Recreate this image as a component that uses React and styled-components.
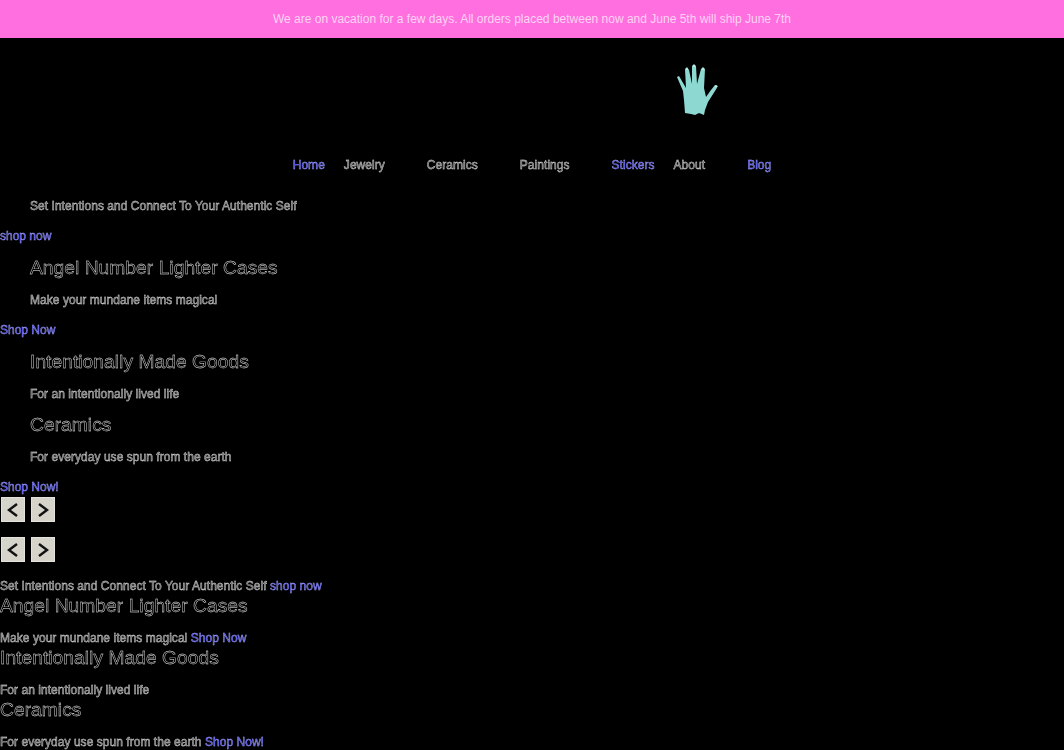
import styled, { createGlobalStyle } from 'styled-components';

const GlobalStyle = createGlobalStyle`
  html, body {
    margin: 0;
    background: #000;
    font-family: "Liberation Sans", Arial, sans-serif;
    font-size: 12px;
    line-height: 14px;
    height: 750px;
    overflow: hidden;
  }
`;

const Banner = styled.div`
  height: 38px;
  background: #ff6fdf;
  color: #ffd4f4;
  display: flex;
  align-items: center;
  justify-content: center;
  font-size: 12px;
`;

const LogoRow = styled.div`
  height: 78px;
  padding-top: 26px;
  padding-left: 677px;
`;

const Nav = styled.nav`
  display: flex;
  justify-content: center;
  gap: 19px;
  margin-bottom: 27px;
  padding-top: 16px;
`;

/* hollow thin glyphs, the reference text renders as dotted outlines */
const hollow = (fill, stroke, width) => `
  color: ${fill};
  -webkit-text-stroke: ${width}px ${stroke};
  will-change: opacity;
`;

const grey = hollow('#4a4a4a', '#e0e0e0', 0.4);
const blue = hollow('#3c3cd8', '#a8a8ff', 0.4);

const NavItem = styled.a`
  ${(p) => (p.$active ? blue : grey)}
  letter-spacing: 0.04px;
  padding-right: ${(p) => (p.$menu ? '23px' : '0')};
`;

const Text = styled.p`
  ${grey}
  letter-spacing: 0.04px;
  margin: 0 0 ${(p) => (p.$flat ? '3px' : p.$snug ? '14px' : '16px')};
  padding-left: ${(p) => (p.$flat ? '0' : '30px')};
`;

const ShopLink = styled.a`
  ${blue}
  display: ${(p) => (p.$inline ? 'inline' : 'block')};
  padding-bottom: ${(p) => (p.$inline ? '0' : '1px')};
`;

const Heading = styled.h2`
  ${hollow('#000', '#efefef', 0.4)}
  letter-spacing: 0.05px;
  font-size: 19.2px;
  line-height: 20px;
  font-weight: normal;
  margin: ${(p) => (p.$flat ? '0 0 15px' : '14px 0 15px')};
  padding-left: ${(p) => (p.$flat ? '0' : '30px')};
`;

const ControlStack = styled.div`
  display: flex;
  flex-direction: column;
  gap: 15px;
  margin: 2px 0 17px;
`;

const Controls = styled.div`
  display: flex;
  gap: 6px;
  padding-left: 1px;
`;

const Arrow = styled.button`
  width: 24px;
  height: 25px;
  padding: 0;
  border: 1px solid #e6e3dc;
  background: #d6d3cb;
  display: flex;
  align-items: center;
  justify-content: center;
`;

const Chevron = ({ left }) => (
  <svg width="14" height="16" viewBox="0 0 14 16" fill="none" stroke="#111" strokeWidth="2.4">
    <path d={left ? 'M11 2 L3 8 L11 14' : 'M3 2 L11 8 L3 14'} />
  </svg>
);

const Hand = () => (
  <svg width="42" height="52" viewBox="0 0 42 52">
    <path
      fill="#8ed8d2"
      d="M0 13 L2 12 L9 24 L8 5 L10 3 L12 6 L15 20 L15 2 L17 0 L19 2 L20 20 L24 5 L26 3 L28 5 L27 24 L29 33 L34 26 L38 21 L41 22 L38 27 L31 38 L28 46 L27 51 L22 49 L18 51 L14 50 L8 49 L7 36 L6 27 Z"
    />
    <path stroke="#e4fbf9" strokeWidth="1" d="M38 22 L40 22 M17 1 L17 3 M26 4 L26 6 M10 4 L10 6" />
  </svg>
);

const ControlRow = () => (
  <Controls>
    <Arrow><Chevron left /></Arrow>
    <Arrow><Chevron /></Arrow>
  </Controls>
);

export default function App() {
  return (
    <>
      <GlobalStyle />
      <Banner>We are on vacation for a few days. All orders placed between now and June 5th will ship June 7th</Banner>
      <LogoRow><Hand /></LogoRow>
      <Nav>
        <NavItem $active>Home</NavItem>
        <NavItem $menu>Jewelry</NavItem>
        <NavItem $menu>Ceramics</NavItem>
        <NavItem $menu>Paintings</NavItem>
        <NavItem $active>Stickers</NavItem>
        <NavItem $menu>About</NavItem>
        <NavItem $active>Blog</NavItem>
      </Nav>

      <Text>Set Intentions and Connect To Your Authentic Self</Text>
      <ShopLink>shop now</ShopLink>
      <Heading>Angel Number Lighter Cases</Heading>
      <Text>Make your mundane items magical</Text>
      <ShopLink>Shop Now</ShopLink>
      <Heading>Intentionally Made Goods</Heading>
      <Text $snug>For an intentionally lived life</Text>
      <Heading>Ceramics</Heading>
      <Text>For everyday use spun from the earth</Text>
      <ShopLink>Shop Now!</ShopLink>
      <ControlStack>
        <ControlRow />
        <ControlRow />
      </ControlStack>

      <Text $flat>
        Set Intentions and Connect To Your Authentic Self <ShopLink $inline>shop now</ShopLink>
      </Text>
      <Heading $flat>Angel Number Lighter Cases</Heading>
      <Text $flat>
        Make your mundane items magical <ShopLink $inline>Shop Now</ShopLink>
      </Text>
      <Heading $flat>Intentionally Made Goods</Heading>
      <Text $flat>For an intentionally lived life</Text>
      <Heading $flat>Ceramics</Heading>
      <Text $flat>
        For everyday use spun from the earth <ShopLink $inline>Shop Now!</ShopLink>
      </Text>
    </>
  );
}
